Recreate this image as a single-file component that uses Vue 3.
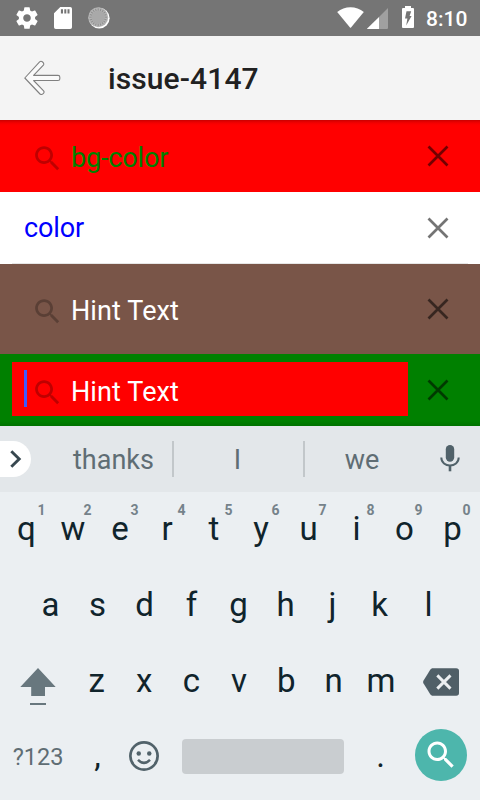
<script setup>
const rows = [
  { kind: 'bg', text: 'bg-color', icon: true },
  { kind: 'plain', text: 'color', icon: false },
  { kind: 'brown', text: 'Hint Text', icon: true },
  { kind: 'green', text: 'Hint Text', icon: true, focused: true },
]
const top = 'qwertyuiop'.split('').map((k, i) => ({ k, n: (i + 1) % 10 }))
const middle = 'asdfghjkl'.split('')
const bottom = 'zxcvbnm'.split('')
const searchPath =
  'M15.5 14h-.79l-.28-.27C15.41 12.59 16 11.11 16 9.5 16 5.91 13.09 3 9.5 3S3 5.91 3 9.5 5.91 16 9.5 16c1.61 0 3.09-.59 4.23-1.57l.27.28v.79l5 4.99L20.49 19l-4.99-5zm-6 0C7.01 14 5 11.99 5 9.5S7.01 5 9.5 5 14 7.01 14 9.5 11.99 14 9.5 14z'
const ticks = Array.from({ length: 20 }, (_, i) => i * 18)
</script>

<template>
  <div class="screen">
    <div class="status">
      <svg class="gear" width="26" height="26" viewBox="0 0 24 24"><path fill="#fff" d="M19.43 12.98c.04-.32.07-.64.07-.98s-.03-.66-.07-.98l2.11-1.65c.19-.15.24-.42.12-.64l-2-3.46c-.12-.22-.39-.3-.61-.22l-2.49 1c-.52-.4-1.08-.73-1.69-.98l-.38-2.65C14.46 2.18 14.25 2 14 2h-4c-.25 0-.46.18-.49.42l-.38 2.65c-.61.25-1.17.59-1.69.98l-2.49-1c-.23-.09-.49 0-.61.22l-2 3.46c-.13.22-.07.49.12.64l2.11 1.65c-.04.32-.07.65-.07.98s.03.66.07.98l-2.11 1.65c-.19.15-.24.42-.12.64l2 3.46c.12.22.39.3.61.22l2.49-1c.52.4 1.08.73 1.69.98l.38 2.65c.03.24.24.42.49.42h4c.25 0 .46-.18.49-.42l.38-2.65c.61-.25 1.17-.59 1.69-.98l2.49 1c.23.09.49 0 .61-.22l2-3.46c.12-.22.07-.49-.12-.64l-2.11-1.65zM12 15.5c-1.93 0-3.5-1.57-3.5-3.5s1.57-3.5 3.5-3.5 3.5 1.57 3.5 3.5-1.57 3.5-3.5 3.5z"/></svg>
      <svg class="sd" width="18" height="22" viewBox="0 0 18 22"><path fill="#fff" fill-rule="evenodd" d="M6.3 0H16.2Q18 0 18 1.8V20.2Q18 22 16.2 22H1.8Q0 22 0 20.2V6.3zM6.9 2.2V6.6H9V2.2zM10.3 2.2V6.6H12.3V2.2zM13.5 2.2V6.6H15.5V2.2z"/></svg>
      <svg class="sync" width="22" height="22" viewBox="0 0 22 22">
        <circle cx="11.2" cy="11.2" r="10.4" fill="#fff"/>
        <circle cx="10.2" cy="10.2" r="10" fill="#b4b4b4"/>
        <path v-for="t in ticks" :key="t" d="M10.2 1.4V3.8" :transform="`rotate(${t} 10.2 10.2)`" stroke="#8e8e8e" stroke-width="1"/>
        <circle cx="10.2" cy="10.2" r="6.5" fill="#a9a9a9"/>
      </svg>
      <span class="grow"></span>
      <svg class="wifi" width="27" height="21" viewBox="0 0 27 21"><path fill="#fff" d="M.2 5C7.5-1.5 19.5-1.5 26.8 5L14 20.4Q13.5 21 13 20.4z"/></svg>
      <svg class="signal" width="21" height="21" viewBox="0 0 21 21"><path fill="#a0a0a0" d="M12 9L21 0V20.2L20.2 21H12z"/><path fill="#fff" d="M12 9V21H.6Q-.3 21 .2 20.4z"/></svg>
      <svg class="battery" width="12" height="22" viewBox="0 0 12 22"><path fill="#fff" d="M3 0H9V2H11Q12 2 12 3V21Q12 22 11 22H1Q0 22 0 21V3Q0 2 1 2H3z"/><path fill="#757575" d="M4.5 5.2H9.2L7.6 10H9.6L4.2 19.6L5.4 12.6H3z"/></svg>
      <span class="clock">8:10</span>
    </div>

    <div class="header">
      <svg width="38" height="36" viewBox="0 0 38 36"><path d="M.8 18L15.6 1.9Q17 .6 18.6 2T19.6 4.8L9.6 15.4H34Q35.8 15.4 35.8 17V18.9Q35.8 20.5 34 20.5H9.6L19.6 30.8Q20.7 32.3 19.2 33.7T16 34z" fill="#fafafa" stroke="#808080" stroke-width="1.1" stroke-linejoin="round"/></svg>
      <h1>issue-4147</h1>
    </div>

    <div v-for="r in rows" :key="r.kind" class="row" :class="r.kind">
      <div class="field">
        <span v-if="r.focused" class="caret"></span>
        <svg v-if="r.icon" class="search" width="33" height="33" viewBox="0 0 24 24"><path :d="searchPath"/></svg>
        <span class="label">{{ r.text }}</span>
      </div>
      <svg class="clear" width="36" height="36" viewBox="0 0 36 36"><path d="M8.5 8.5L27.5 27.5M27.5 8.5L8.5 27.5" stroke="#000" stroke-width="2.7" fill="none"/></svg>
    </div>

    <div class="suggest">
      <div class="chip"><svg width="12" height="18" viewBox="0 0 12 18"><path d="M1.3 1.2L9.2 9L1.3 16.8" fill="none" stroke="#37474f" stroke-width="2.9"/></svg></div>
      <span class="word first">thanks</span>
      <span class="bar"></span>
      <span class="word second">I</span>
      <span class="bar"></span>
      <span class="word third">we</span>
      <svg class="mic" width="20" height="27" viewBox="0 0 20 27"><rect x="5.8" y="0" width="8.4" height="16.8" rx="4.2" fill="#51626a"/><path d="M1.3 12.5C1.3 23 18.7 23 18.7 12.5" fill="none" stroke="#51626a" stroke-width="2"/><path d="M10 20V26.3" stroke="#51626a" stroke-width="2.6"/></svg>
    </div>

    <div class="keyboard">
      <div class="keys top">
        <span v-for="t in top" :key="t.k" class="key">{{ t.k }}<small>{{ t.n }}</small></span>
      </div>
      <div class="keys middle">
        <span v-for="k in middle" :key="k" class="key">{{ k }}</span>
      </div>
      <div class="keys bottom">
        <svg class="shift" width="36" height="38" viewBox="0 0 36 38"><path fill="#68777e" d="M18 0L35.7 19H25V28H11.2V19H.3zM10 35H26V37H10z"/></svg>
        <span v-for="k in bottom" :key="k" class="key">{{ k }}</span>
        <svg class="del" width="36" height="28" viewBox="0 0 36 28"><path fill="#505f67" d="M9 .3H33.2Q36 .3 36 3V25Q36 27.7 33.2 27.7H9L7.4 26.5L.4 15.3Q-.2 14 .4 12.7L7.4 1.5z"/><path d="M14.3 7.4L27.5 20.6M27.5 7.4L14.3 20.6" stroke="#eceff1" stroke-width="2.9"/></svg>
      </div>
      <div class="keys last">
        <span class="sym">?123</span>
        <span class="comma">,</span>
        <svg class="smile" width="36" height="36" viewBox="0 0 24 24"><circle cx="12" cy="12" r="9.1" fill="none" stroke="#51626a" stroke-width="1.8"/><circle cx="8.5" cy="10.3" r="1.5" fill="#51626a"/><circle cx="15.5" cy="10.3" r="1.5" fill="#51626a"/><path d="M8 14.6Q12 18.6 16 14.6" fill="none" stroke="#51626a" stroke-width="1.7"/></svg>
        <span class="space"></span>
        <span class="dot">.</span>
        <span class="go"><svg width="36" height="36" viewBox="0 0 24 24"><path fill="#fff" :d="searchPath"/></svg></span>
      </div>
    </div>
  </div>
</template>

<style>
body { margin: 0; }
</style>

<style scoped>
* { box-sizing: border-box; }
.screen { width: 480px; height: 800px; overflow: hidden; font-family: Roboto, sans-serif; background: #ebeff2; }
svg { display: block; flex: none; }
.status { height: 36px; background: #757575; display: flex; align-items: flex-start; padding: 0 12px 0 14px; }
.gear { margin-top: 5px; }
.sd { margin: 7px 0 0 14px; }
.sync { margin: 7px 0 0 16px; }
.grow { flex: 1; }
.wifi { margin: 7px 3px 0 0; }
.signal { margin: 8px 14px 0 0; }
.battery { margin: 6px 12px 0 0; }
.clock { width: 42px; font-size: 21px; font-weight: 500; line-height: 38px; color: #fff; white-space: nowrap; }
.header { height: 84px; background: #f4f4f4; display: flex; align-items: center; padding-left: 24px; }
h1 { margin: 0 0 0 46px; font-size: 30px; font-weight: 500; line-height: 84px; padding-top: 2px; letter-spacing: .1px; color: #212121; white-space: nowrap; }
.row { display: flex; align-items: center; height: 72px; padding: 0 24px 0 12px; }
.field { display: flex; align-items: center; width: 396px; height: 54px; padding-left: 12px; }
.search { margin: 0 7px 0 7px; opacity: .25; }
.label { font-size: 27px; line-height: 32px; white-space: nowrap; }
.clear { margin-left: 12px; opacity: .54; }
.bg { background: linear-gradient(#c80000, #e80000 2px, #fa0000 4px, red 6px); color: #008000; }
.bg .label { margin-top: 4px; letter-spacing: -.15px; }
.bg .search { margin-top: 5px; }
.plain { background: linear-gradient(90deg, #fff 12px, #e6e6e6 12px, #e6e6e6 468px, #fff 468px) bottom / 100% 1px no-repeat #fff; color: #00f; }
.plain .label { letter-spacing: -.15px; }
.brown { height: 90px; background: #795548; color: #fff; }
.brown .label { margin-top: 4px; letter-spacing: .1px; }
.brown .search { margin-top: 5px; }
.green { background: linear-gradient(transparent 67px, #007300) #008000; color: #fff; }
.green .field { background: red; margin-bottom: 2px; }
.green .label { margin-top: 6px; letter-spacing: .1px; }
.green .search { margin: 7px 7px 0 4px; }
.caret { width: 3px; height: 37px; background: #3d5afe; margin-top: -1px; }
.suggest { height: 66px; background: #e3e7ea; display: flex; align-items: center; }
.chip { width: 31px; height: 36px; border-radius: 0 18px 18px 0; background: #fff; display: flex; align-items: center; padding-left: 10px; }
.word { font-size: 27px; line-height: 66px; padding-top: 2px; color: #5f6d74; text-align: center; }
.first { width: 141px; padding-left: 24px; }
.second { width: 127px; margin-right: 2px; }
.third { width: 114px; }
.bar { width: 2px; height: 36px; background: #c2c7ca; }
.mic { margin-left: 21px; margin-bottom: 2px; }
.keys { height: 76px; display: flex; align-items: flex-start; font-size: 33px; line-height: 74px; color: #10242c; }
.key { position: relative; width: 47px; text-align: center; }
.key small { position: absolute; left: 28px; width: 20px; top: 9px; font-size: 14px; line-height: 18px; font-weight: 700; color: #75828a; }
.top { padding-left: 3.5px; }
.top .key:first-child { width: 46px; }
.top .key:nth-child(n + 7) { width: 48px; }
.middle { padding-left: 27px; }
.middle .key:last-child { margin-left: 2px; }
.bottom .key { width: 47.4px; }
.shift { margin: 24px 17px 0 20px; }
.del { margin: 24px 0 0 18px; }
.sym { width: 76px; text-align: center; font-size: 23.5px; line-height: 75px; color: #5f6d74; }
.comma { width: 43px; text-align: center; line-height: 72px; }
.smile { margin: 18px 0 0 7px; }
.space { width: 162px; height: 35px; border-radius: 4px; background: #c9cdd0; margin: 19px 0 0 20px; }
.dot { width: 73px; text-align: center; line-height: 72px; }
.go { width: 52px; height: 52px; border-radius: 50%; background: #4db6ac; display: flex; align-items: center; justify-content: center; margin: 9.3px 0 0 -2.5px; }
</style>
